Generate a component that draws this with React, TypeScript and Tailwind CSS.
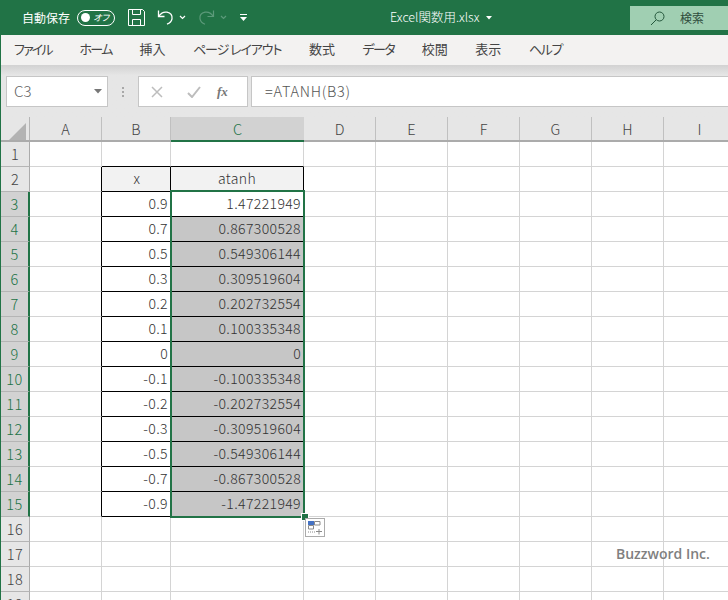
const colWidths = [29, 72, 69, 133, 72, 72, 72, 72, 72, 72];
const colNames = ['A', 'B', 'C', 'D', 'E', 'F', 'G', 'H', 'I'];
const tabs = [
  ['ファイル', 'tracking-[-1.8px]'],
  ['ホーム', 'tracking-[-1.6px]'],
  ['挿入', ''],
  ['ページ レイアウト', 'tracking-[-1.1px]'],
  ['数式', ''],
  ['データ', 'tracking-[-1.6px]'],
  ['校閲', ''],
  ['表示', ''],
  ['ヘルプ', 'tracking-[-1.3px]'],
];

const values = [
  ['0.9', '1.47221949'],
  ['0.7', '0.867300528'],
  ['0.5', '0.549306144'],
  ['0.3', '0.309519604'],
  ['0.2', '0.202732554'],
  ['0.1', '0.100335348'],
  ['0', '0'],
  ['-0.1', '-0.100335348'],
  ['-0.2', '-0.202732554'],
  ['-0.3', '-0.309519604'],
  ['-0.5', '-0.549306144'],
  ['-0.7', '-0.867300528'],
  ['-0.9', '-1.47221949'],
];

function TitleBar() {
  return (
    <div className="h-[35px] bg-[#217346] flex items-center text-white shrink-0 font-normal">
      <span className="ml-[21px] text-[12px] w-[48px] whitespace-nowrap">自動保存</span>
      <div className="ml-[7px] w-[38px] h-[16px] rounded-full border border-white flex items-center justify-between px-[3px]">
        <div className="w-[9px] h-[9px] rounded-full bg-white" />
        <span className="text-[9px] leading-none mr-[2px] italic [font-feature-settings:'palt']">オフ</span>
      </div>
      <svg className="ml-[13px]" width="17" height="17" viewBox="0 0 17 17" fill="none" stroke="white" strokeWidth="1">
        <path d="M.5.5h14l2 2v14H.5z" />
        <path d="M4.5.5v5h8v-5M4.5 16.5v-6h8v6" />
      </svg>
      <svg className="ml-[12px]" width="17" height="18" viewBox="0 0 17 18" fill="none" stroke="white" strokeWidth="1.3">
        <path d="M1.5 1.5v6h6" />
        <path d="M1.8 7.2C4 4 7 2.6 10 3.2c3.5.8 5.4 3.6 5 6.6-.4 2.4-2 4.2-5 5.4" />
      </svg>
      <svg className="ml-[5px]" width="7" height="5" viewBox="0 0 7 5" fill="none" stroke="white" strokeWidth="1.2">
        <path d="M1 1l2.5 2.5L6 1" />
      </svg>
      <svg className="ml-[12px]" width="17" height="18" viewBox="0 0 17 18" fill="none" stroke="#5c9a7a" strokeWidth="1.2">
        <path d="M15.5 1.5v6h-6" />
        <path d="M15.2 7.2C13 4 10 2.6 7 3.2c-3.5.8-5.4 3.6-5 6.6.4 2.4 2 4.2 5 5.4" />
      </svg>
      <svg className="ml-[5px]" width="7" height="5" viewBox="0 0 7 5" fill="none" stroke="#5c9a7a" strokeWidth="1.2">
        <path d="M1 1l2.5 2.5L6 1" />
      </svg>
      <svg className="ml-[13px]" width="7" height="8" viewBox="0 0 7 8" fill="white">
        <path d="M0 0h7v1H0zM0 3h7L3.5 7z" />
      </svg>
      <span className="ml-[143px] text-[12.5px] font-light whitespace-nowrap">Excel関数用.xlsx</span>
      <svg className="ml-[6px]" width="6" height="4" viewBox="0 0 6 4" fill="white">
        <path d="M0 0h6L3 3.5z" />
      </svg>
      <div className="ml-auto self-start mt-[6px] w-[98px] h-[24px] bg-[#a0cfb2] flex items-center text-[#2f4d3c]">
        <svg className="ml-[20px]" width="15" height="15" viewBox="0 0 15 15" fill="none" stroke="#24573c" strokeWidth="1">
          <circle cx="9.5" cy="5.5" r="4.5" />
          <path d="M6.2 8.8L1 14" />
        </svg>
        <span className="ml-[15px] text-[12px] whitespace-nowrap">検索</span>
      </div>
    </div>
  );
}

function RibbonTabs() {
  return (
    <div className="h-[30px] bg-[#f3f2f1] flex items-center gap-[27.6px] pl-[13px] pb-[2px] text-[13px] text-[#444444] shrink-0 font-normal [font-feature-settings:'palt']">
      {tabs.map(([t, track]) => (
        <span key={t} className={`whitespace-nowrap ${track}`}>{t}</span>
      ))}
    </div>
  );
}

function FormulaBar() {
  return (
    <div className="h-[52px] shrink-0 bg-gradient-to-b from-[#d2d2d2] to-[#e6e6e6] to-[20%] pt-[11px] pb-[10px] flex items-stretch pl-[5px]">
      <div className="w-[102px] bg-white border border-[#c6c6c6] flex items-center justify-between pl-[7px] pr-[5px] text-[15px] text-[#5f5f5f]">
        <span>C3</span>
        <svg width="8" height="5" viewBox="0 0 8 5" fill="#777777"><path d="M0 0h8L4 4.5z" /></svg>
      </div>
      <div className="w-[30px] flex flex-col items-center justify-center gap-[2px]">
        <div className="w-[2px] h-[2px] bg-[#a8a8a8]" />
        <div className="w-[2px] h-[2px] bg-[#a8a8a8]" />
        <div className="w-[2px] h-[2px] bg-[#a8a8a8]" />
      </div>
      <div className="w-[110px] bg-white border border-[#c6c6c6] flex items-center">
        <svg className="ml-[12px]" width="12" height="12" viewBox="0 0 12 12" fill="none" stroke="#bdbdbd" strokeWidth="1.5"><path d="M1 1l10 10M11 1L1 11" /></svg>
        <svg className="ml-[24px]" width="14" height="12" viewBox="0 0 14 12" fill="none" stroke="#bdbdbd" strokeWidth="2"><path d="M1 7l4 4 8-10" /></svg>
        <span className="ml-[16px] text-[13px] italic font-bold text-[#777777] font-['Liberation_Serif',serif]">fx</span>
      </div>
      <div className="ml-[3px] flex-1 bg-white border border-[#c6c6c6] border-r-0 flex items-center pl-[13px] pb-[2px] text-[14.5px] text-[#555555] tracking-[0.7px]">
        =ATANH(B3)
      </div>
    </div>
  );
}

function HeaderRow() {
  return (
    <div className="flex h-[25px] bg-[#e6e6e6] border-b-2 border-[#ababab] shrink-0">
      <div className="h-full relative border-r border-[#b5b5b5] shrink-0" style={{ width: colWidths[0] }}>
        <svg className="absolute left-[8px] top-[6px]" width="17" height="17" viewBox="0 0 17 17" fill="#b3b3b3"><path d="M17 0v17H0z" /></svg>
      </div>
      {colNames.map((c, i) => (
        <div
          key={c}
          className={c === 'C'
            ? 'h-[25px] shrink-0 flex items-center justify-center bg-[#d2d2d2] border-b-2 border-[#217346] text-[#217346] text-[14.5px]'
            : 'h-full shrink-0 flex items-center justify-center border-r border-[#c0c0c0] text-[#444444] text-[14.5px]'}
          style={{ width: colWidths[i + 1] }}
        >
          {c}
        </div>
      ))}
    </div>
  );
}

function Row({ n }: { n: number }) {
  const inTable = n >= 2 && n <= 15;
  const isHead = n === 2;
  const selected = n >= 3 && n <= 15;
  const vals = selected ? values[n - 3] : null;
  const topBlack = n === 1 ? 'border-b border-b-black' : 'border-b border-b-[#d4d4d4]';
  return (
    <div className="flex h-[25px] shrink-0 tracking-[0.38px] text-[#333333] text-[14px]">
      <div
        className={selected
          ? 'shrink-0 flex items-center justify-center bg-[#d2d2d2] border-b border-[#b5b5b5] border-r-2 border-r-[#217346] text-[#217346] text-[14.5px]'
          : 'shrink-0 flex items-center justify-center bg-[#e6e6e6] border-b border-[#b5b5b5] border-r border-r-[#ababab] text-[#444444] text-[14.5px]'}
        style={{ width: colWidths[0] }}
      >
        {n}
      </div>
      <div
        className={inTable ? 'shrink-0 border-b border-b-[#d4d4d4] border-r border-r-black' : 'shrink-0 border-b border-r border-[#d4d4d4]'}
        style={{ width: colWidths[1] }}
      />
      <div
        className={inTable
          ? `shrink-0 border-b border-r border-black flex items-center pb-[2px] ${isHead ? 'bg-[#f2f2f2] justify-center pl-[2px]' : 'bg-white justify-end pr-[2px]'}`
          : `shrink-0 ${topBlack} border-r border-r-[#d4d4d4]`}
        style={{ width: colWidths[2] }}
      >
        {isHead ? 'x' : vals ? vals[0] : null}
      </div>
      <div
        className={inTable
          ? `shrink-0 border-b border-r border-black flex items-center pb-[2px] ${isHead ? 'bg-[#f2f2f2] justify-center' : n === 3 ? 'bg-white justify-end pr-[2px]' : 'bg-[#c6c6c6] justify-end pr-[2px]'}`
          : `shrink-0 ${topBlack} border-r border-r-[#d4d4d4]`}
        style={{ width: colWidths[3] }}
      >
        {isHead ? 'atanh' : vals ? vals[1] : null}
      </div>
      {colWidths.slice(4).map((w, i) => (
        <div key={i} className="border-b border-r border-[#d4d4d4] shrink-0" style={{ width: w }} />
      ))}
    </div>
  );
}

export default function App() {
  const rows = Array.from({ length: 19 }, (_, i) => i + 1);
  return (
    <div className="w-[728px] h-[600px] overflow-hidden bg-white flex flex-col relative border-l border-[#217346] font-['Noto_Sans_CJK_JP','Noto_Sans',sans-serif] font-light">
      <TitleBar />
      <RibbonTabs />
      <FormulaBar />
      <HeaderRow />
      <div className="relative flex flex-col">
        {rows.map((n) => (
          <Row key={n} n={n} />
        ))}
        {/* selection outline C3:C15 */}
        <div className="absolute left-[169px] top-[48px] w-[135px] h-[328px] border-2 border-[#217346] pointer-events-none" />
        <div className="absolute left-[300px] top-[371px] w-[6px] h-[6px] bg-[#217346] box-content border border-white" />
        {/* quick analysis button */}
        <div className="absolute left-[304px] top-[376px] w-[20px] h-[19px] bg-white border border-[#ababab] flex items-center justify-center">
          <svg width="16" height="14" viewBox="0 0 16 14">
            <path d="M1 0h6v4H1z" fill="#4472c4" />
            <path d="M7.5.5h5.5v3.5H7.5zM1.5 4.5h5V8h-5z" fill="none" stroke="#8a8a8a" />
            <path d="M1 11h7" stroke="#8a8a8a" strokeDasharray="1 1" />
            <path d="M9 10.5h6M12 8v5.5" stroke="#8a8a8a" />
          </svg>
        </div>
        <span className="absolute left-[615px] top-[401px] text-[14px] font-semibold text-[#808080] font-['Open_Sans',sans-serif] whitespace-nowrap">Buzzword Inc.</span>
      </div>
    </div>
  );
}
